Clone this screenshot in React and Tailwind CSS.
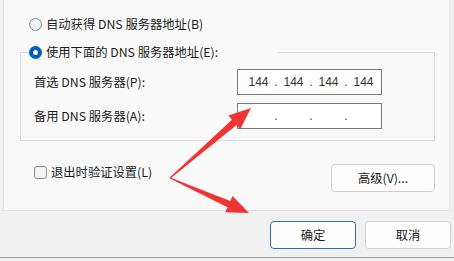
import React from "react";

const font = { fontFamily: '"Noto Sans CJK SC", "Noto Sans", sans-serif' };

function Radio({ checked }) {
  if (checked) {
    return (
      <span className="flex h-[13px] w-[13px] shrink-0 items-center justify-center rounded-full bg-[#005fb8]">
        <span className="h-[5px] w-[5px] rounded-full bg-white" />
      </span>
    );
  }
  return (
    <span className="h-[13px] w-[13px] shrink-0 rounded-full border border-[#8a8a8a] bg-[#f3f3f3]" />
  );
}

function IpBox({ parts }) {
  return (
    <div className="flex h-[26px] w-[145px] items-center border border-[#7a7a7a] bg-white pl-[7px] text-[12px] text-[#333]" style={{ fontFamily: '"Liberation Sans", Arial, sans-serif' }}>
      {parts.map((p, i) => (
        <React.Fragment key={i}>
          <span className="w-[27px] text-center">{p}</span>
          {i < parts.length - 1 && <span className="w-[8px] text-center">.</span>}
        </React.Fragment>
      ))}
    </div>
  );
}

function Arrows() {
  return (
    <svg className="pointer-events-none absolute left-0 top-0" width="454" height="261" viewBox="0 0 454 261">
      <polygon
        fill="#f03434"
        points="170.4,178.4 236.6,125 240.2,129.2 251,108 228.4,115.6 232,119.8 169.6,177.6"
      />
      <polygon
        fill="#f03434"
        points="170.2,177.5 230.3,200.9 232.5,195.9 249,213 225.2,212.3 227.5,207.3 169.8,178.5"
      />
    </svg>
  );
}

export default function App() {
  return (
    <div className="relative h-[261px] w-[454px] overflow-hidden bg-[#f0f0f0] text-[12.3px] text-[#1b1b1b]" style={font}>
      <div className="ml-[3px] flex h-[211px] w-[447px] flex-col border-x border-b border-[#e3e3e3] bg-[#f9f9f9]">
        <div className="mt-[18px] flex h-[13px] items-center gap-[4px] pl-[25px] leading-none">
          <Radio />
          <span>自动获得 DNS 服务器地址(B)</span>
        </div>

        <fieldset className="ml-[16px] mt-[15px] w-[415px] border border-[#dcdcdc] pb-[11px]">
          <legend className="ml-[7px] pl-px pr-[60px]">
            <div className="flex h-[13px] items-center gap-[4px] leading-none">
              <Radio checked />
              <span>使用下面的 DNS 服务器地址(E):</span>
            </div>
          </legend>
          <div className="mt-[10px] flex flex-col gap-[8px] pl-[13px] pr-[52px]">
            <div className="flex items-center justify-between">
              <span>首选 DNS 服务器(P):</span>
              <IpBox parts={["144", "144", "144", "144"]} />
            </div>
            <div className="flex items-center justify-between">
              <span>备用 DNS 服务器(A):</span>
              <IpBox parts={["", "", "", ""]} />
            </div>
          </div>
        </fieldset>

        <div className="mt-[23px] flex items-start justify-between pl-[30px] pr-[14px]">
          <label className="mt-[2px] flex h-[13px] items-center gap-[4px] leading-none">
            <span className="h-[13px] w-[13px] rounded-[3px] border border-[#8a8a8a] bg-[#f3f3f3]" />
            <span>退出时验证设置(L)</span>
          </label>
          <button className="h-[28px] w-[104px] rounded-[4px] border border-[#d0d0d0] bg-[#fdfdfd] text-[12.3px]">
            高级(V)...
          </button>
        </div>
      </div>

      <div className="flex h-[47px] items-start justify-end gap-[9px] border-b border-[#9a9a9a] pr-[3px] pt-[10px]">
        <button className="h-[28px] w-[86px] rounded-[4px] border border-[#2b6fb3] bg-[#fdfdfd] text-[12.3px]">
          确定
        </button>
        <button className="h-[28px] w-[86px] rounded-[4px] border border-[#d0d0d0] bg-[#fdfdfd] text-[12.3px]">
          取消
        </button>
      </div>

      <Arrows />
    </div>
  );
}
